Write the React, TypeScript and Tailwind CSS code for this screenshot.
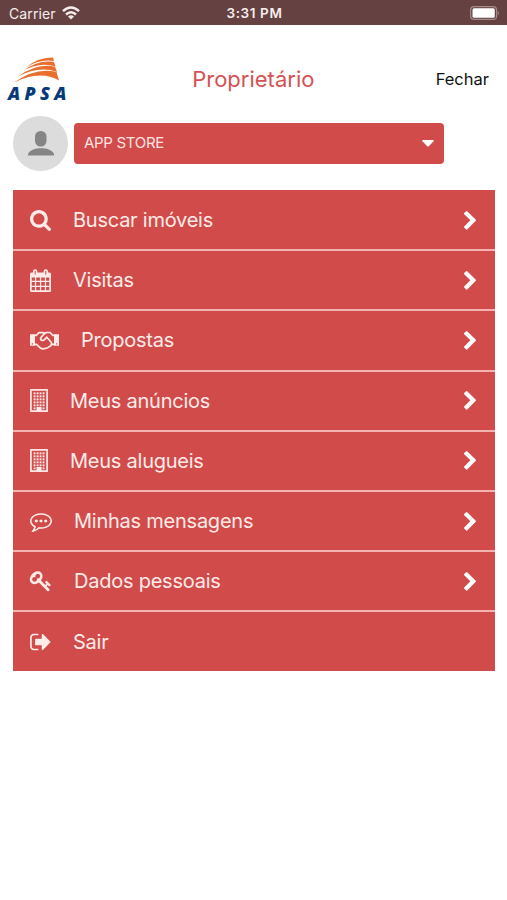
import type { ReactNode } from "react";

type GlyphProps = { d: string; box?: string; className: string };

function Glyph({ d, box = "0 0 1792 1792", className }: GlyphProps) {
  return (
    <svg viewBox={box} className={`overflow-visible ${className}`} fill="currentColor" aria-hidden="true">
      <path fillRule="evenodd" d={d} />
    </svg>
  );
}

const SEARCH =
  "M1152 832q0-185-131.500-316.500t-316.500-131.500-316.500 131.500-131.500 316.500 131.500 316.500 316.500 131.500 316.500-131.500 131.500-316.500zm512 832q0 52-38 90t-90 38q-54 0-90-38l-343-342q-179 124-399 124-143 0-273.500-55.500t-225-150-150-225-55.500-273.500 55.500-273.500 150-225 225-150 273.500-55.500 273.500 55.500 225 150 150 225 55.500 273.500q0 220-124 399l343 343q37 37 37 90z";
const KEY =
  "M832 512q0-80-56-136t-136-56-136 56-56 136q0 42 19 83-41-19-83-19-80 0-136 56t-56 136 56 136 136 56 136-56 56-136q0-42-19-83 41 19 83 19 80 0 136-56t56-136zm851 704q0 17-49 66t-66 49q-9 0-28.500-16t-36.500-33-38.500-40-24.500-26l-96 96 220 220q28 28 28 68 0 42-39 81t-81 39q-40 0-68-28l-671-671q-176 131-365 131-163 0-265.500-102.500t-102.500-265.500q0-160 95-313t248-248 313-95q163 0 265.500 102.500t102.500 265.500q0 189-131 365l355 355 96-96q-3-3-26-24.500t-40-38.500-33-36.500-16-28.500q0-17 49-66t66-49q13 0 23 10 6 6 46 44.500t82 79.500 86.500 86 73 78 28.500 41z";
const SIGN_OUT =
  "M704 1440q0 4 1 20t.5 26.500-3 23.500-10 19.500-20.500 6.500h-320q-119 0-203.500-84.500t-84.500-203.500v-704q0-119 84.500-203.500t203.500-84.500h320q13 0 22.500 9.500t9.500 22.500q0 4 1 20t.5 26.500-3 23.500-10 19.500-20.500 6.500h-320q-66 0-113 47t-47 113v704q0 66 47 113t113 47h312l11.500 1 11.500 3 8 5.500 7 9 2 13.500zm928-544q0 26-19 45l-544 544q-19 19-45 19t-45-19-19-45v-288h-448q-26 0-45-19t-19-45v-384q0-26 19-45t45-19h448v-288q0-26 19-45t45-19 45 19l544 544q19 19 19 45z";
const CHEVRON =
  "M1363 877l-742 742q-19 19-45 19t-45-19l-166-166q-19-19-19-45t19-45l531-531-531-531q-19-19-19-45t19-45l166-166q19-19 45-19t45 19l742 742q19 19 19 45t-19 45z";
const COMMENT =
  "M640 896q0 53-37.500 90.500t-90.500 37.500-90.500-37.500-37.500-90.500 37.500-90.500 90.500-37.500 90.500 37.500 37.500 90.500zm384 0q0 53-37.500 90.500t-90.500 37.500-90.500-37.500-37.500-90.500 37.500-90.500 90.500-37.500 90.500 37.500 37.500 90.500zm384 0q0 53-37.500 90.500t-90.500 37.500-90.500-37.500-37.500-90.500 37.500-90.500 90.500-37.500 90.500 37.500 37.500 90.500zm-512-512q-204 0-381.500 69.500t-282 187.500-104.500 255q0 112 71.500 213.500t201.500 175.500l87 50-27 96q-24 91-70 172 152-63 275-171l43-38 57 6q69 8 130 8 204 0 381.500-69.500t282-187.500 104.500-255-104.500-255-282-187.500-381.500-69.500zm896 512q0 174-120 321.500t-326 233-450 85.500q-70 0-145-8-198 175-460 242-49 14-114 22h-5q-15 0-27-10.500t-16-27.500v-1q-3-4-.5-12t2-10 4.500-9.500l6-9 7-8.500 8-9q7-8 31-34.500t34.500-38 31-39.500 32.500-51 27-59 26-76q-157-89-247.500-220t-90.500-281q0-174 120-321.500t326-233 450-85.500 450 85.500 326 233 120 321.500z";

function CalendarIcon() {
  return (
    <svg viewBox="0 0 21 23" className="h-[23px] w-[21px]" aria-hidden="true">
      <path
        fill="currentColor"
        fillRule="evenodd"
        d="M1.500 3.500H3V2.500A2.200 2.200 0 0 1 7.400 2.500V3.500H13.600V2.500A2.200 2.200 0 0 1 18 2.500V3.500H19.500A1.500 1.500 0 0 1 21 5V21.500A1.500 1.500 0 0 1 19.500 23H1.500A1.500 1.500 0 0 1 0 21.500V5A1.500 1.500 0 0 1 1.500 3.500ZM1.700 8.500V11.800H4.900V8.500ZM6.200 8.500V11.800H9.900V8.500ZM11.200 8.500V11.800H14.800V8.500ZM16.100 8.500V11.800H19.300V8.500ZM1.700 13.100V16.700H4.900V13.100ZM6.200 13.100V16.700H9.900V13.100ZM11.200 13.100V16.700H14.800V13.100ZM16.100 13.100V16.700H19.300V13.100ZM1.700 18V21.300H4.900V18ZM6.200 18V21.300H9.900V18ZM11.200 18V21.300H14.800V18ZM16.100 18V21.300H19.300V18ZM4.700 2V5.500H5.700V2ZM15.300 2V5.500H16.300V2Z"
      />
    </svg>
  );
}

function HandshakeIcon() {
  return (
    <svg viewBox="0 0 29 19" className="h-[19px] w-[29px]" aria-hidden="true">
      <path
        fill="currentColor"
        fillRule="evenodd"
        d="M0 3.200H5V14.800H0ZM1.700 12.200V13.400H3V12.200ZM24 3.200H29V14.800H24ZM26 12.200V13.400H27.300V12.200Z"
      />
      <g fill="none" stroke="currentColor" strokeWidth="1.700" strokeLinejoin="round" strokeLinecap="round">
        <path d="M4.500 4.300H6.200L9 1.700H13.200L14.700 2.500L16.300 1.500H20L22.800 4.300H24.500" />
        <path d="M4.500 13.300H6.500L10 16.700Q13 18.800 15.500 17.300Q18 17.300 19 15.600Q21 15.500 21.500 13.400H24.500" />
        <path d="M14.700 2.500L11 6.300Q10 8.300 11.500 9.200Q13.200 9.900 14.700 8.300L16.800 6.200L21 11Q22 12.200 21.400 13.500" />
      </g>
    </svg>
  );
}

function BuildingIcon() {
  const cols = [3.6, 6.6, 9.6, 12.6];
  const rows = [3.4, 6.4, 9.4, 12.4, 15.4];
  return (
    <svg viewBox="0 0 18 23" className="h-[23px] w-[18px]" aria-hidden="true">
      <rect x="0.900" y="0.900" width="16.200" height="21.200" fill="none" stroke="currentColor" strokeWidth="1.700" />
      {rows.map((y) =>
        cols.map((x) => <rect key={`${x}-${y}`} x={x} y={y} width="1.900" height="1.900" fill="currentColor" />),
      )}
      <path fill="currentColor" d="M3.600 18.400h1.900v1.900H3.600zM12.600 18.400h1.900v1.900h-1.900zM6.500 18h5.100v4.500H6.500z" />
    </svg>
  );
}

function ApsaLogo() {
  return (
    <div className="flex w-[64px] flex-col items-start">
      <svg viewBox="0 0 46 26" className="ml-[7px] h-[26px] w-[46px]" fill="#e8702c" aria-hidden="true">
        <path d="M12 10.500Q24 0 39 .5L40 4Q25 2 12 10.500Z" />
        <path d="M8 14.500Q24 2.500 40 5L41.500 9.500Q25 4.500 8 14.500Z" />
        <path d="M4 19.500Q23 5.500 41 9.700L43 15Q25 8.500 4 19.500Z" />
        <path d="M0 25.500Q22 10 42.500 15L45 23.500Q26 12.500 0 25.500Z" />
      </svg>
      <span className="mt-px pl-px font-['Open_Sans',sans-serif] text-[18px] leading-[18px] font-extrabold tracking-[4.300px] text-[#073a78] italic">
        APSA
      </span>
    </div>
  );
}

type Item = { label: string; icon: ReactNode; gap: string; arrow: boolean };

const ITEMS: Item[] = [
  { label: "Buscar imóveis", icon: <Glyph d={SEARCH} box="0 128 1664 1664" className="size-[21px]" />, gap: "gap-[22px]", arrow: true },
  { label: "Visitas", icon: <CalendarIcon />, gap: "gap-[22px]", arrow: true },
  { label: "Propostas", icon: <HandshakeIcon />, gap: "gap-[22px]", arrow: true },
  { label: "Meus anúncios", icon: <BuildingIcon />, gap: "gap-[22px]", arrow: true },
  { label: "Meus alugueis", icon: <BuildingIcon />, gap: "gap-[22px]", arrow: true },
  { label: "Minhas mensagens", icon: <Glyph d={COMMENT} className="size-[22px]" />, gap: "gap-[22px]", arrow: true },
  { label: "Dados pessoais", icon: <Glyph d={KEY} box="20 100 1680 1680" className="size-[21px]" />, gap: "gap-[23px]", arrow: true },
  { label: "Sair", icon: <Glyph d={SIGN_OUT} box="64 128 1600 1536" className="h-[20px] w-[21px]" />, gap: "gap-[22px]", arrow: false },
];

export default function App() {
  return (
    <div className="h-[900px] w-full bg-white font-[Inter,sans-serif]">
      <header className="grid h-[25px] grid-cols-3 items-center bg-[#664141] pt-px pr-[7px] pl-[9px] text-[#f6eeee]">
        <div className="flex items-center gap-[6px] text-[14px]">
          <span className="tracking-[0.100px]">Carrier</span>
          <svg viewBox="0 0 18 14" className="h-[14px] w-[18px]" aria-hidden="true">
            <g fill="none" stroke="currentColor" strokeWidth="2.500">
              <path d="M1 5.200Q9-2.200 17 5.200" />
              <path d="M4 8.500Q9 4 14 8.500" />
            </g>
            <path fill="currentColor" d="M6 10.500Q9 8 12 10.500L9 13.600Z" />
          </svg>
        </div>
        <span className="pt-px text-center text-[13.500px] font-semibold tracking-[0.600px]">3:31 PM</span>
        <svg viewBox="0 0 30 14" className="h-[14px] w-[30px] justify-self-end" aria-hidden="true">
          <rect x="0.600" y="0.600" width="26" height="12.800" rx="3.500" fill="none" stroke="#a48b8b" strokeWidth="1.200" />
          <rect x="2.500" y="2.300" width="22.300" height="9.400" rx="1.500" fill="#fff" />
          <path d="M27.800 4.700Q30 7 27.800 9.300Z" fill="#a48b8b" />
        </svg>
      </header>

      <div className="flex h-[90px] items-center justify-between pr-[18px] pl-[7px]">
        <div className="mt-[19px]">
          <ApsaLogo />
        </div>
        <h1 className="mt-[18px] text-[22px] text-[#d45252]">Proprietário</h1>
        <button className="mt-[18px] text-[16.500px] text-[#111]">Fechar</button>
      </div>

      <div className="flex h-[56px] items-center gap-[6px] pl-[13px]">
        <div className="flex size-[55px] items-center justify-center rounded-full bg-[#dcdcdc]">
          <svg viewBox="0 0 26 25" className="h-[25px] w-[26px]" fill="#858585" aria-hidden="true">
            <rect x="7" y="0" width="11.500" height="15.500" rx="5.500" />
            <path d="M0 24.500V23C2 18.500 8 17.300 13 17.300S24 18.500 26 23V24.500Z" />
          </svg>
        </div>
        <div className="flex h-[41px] w-[370px] items-center justify-between rounded-[4px] bg-[#d14b4b] pr-[10px] pl-[10px] text-[#ffe5e2]">
          <span className="pt-px text-[15px] tracking-[-0.300px]">APP STORE</span>
          <svg viewBox="0 0 12 7" className="h-[7px] w-[12px]" fill="#fff" aria-hidden="true">
            <path d="M1 0H11Q12.300 .3 11.500 1.200L6.800 6.200Q6 7 5.200 6.200L.5 1.200Q-.3 .3 1 0Z" />
          </svg>
        </div>
      </div>

      <nav className="mx-[13px] mt-[19px] w-[482px] bg-[#d14b4b] pt-px">
        {ITEMS.map(({ label, icon, gap, arrow }) => (
          <div
            key={label}
            className="flex h-[60.200px] items-center justify-between border-b-2 border-[#f3b3b1] pr-[19px] pl-[17px] text-[#ffece9] last:h-[59px] last:border-b-0"
          >
            <div className={`flex items-center ${gap}`}>
              {icon}
              <span className="text-[20px] leading-none tracking-[-0.240px]">{label}</span>
            </div>
            {arrow && <Glyph d={CHEVRON} box="346 38 1036 1620" className="h-[19px] w-[12px] text-white" />}
          </div>
        ))}
      </nav>
    </div>
  );
}
